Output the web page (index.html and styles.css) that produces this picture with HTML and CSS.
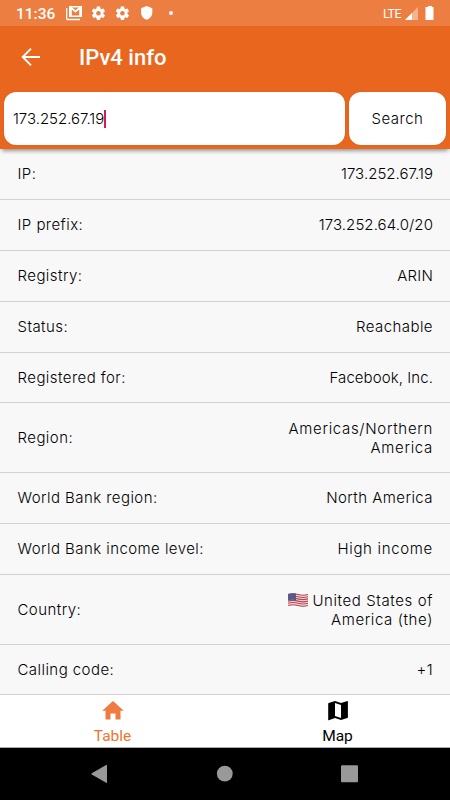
FILE: index.html
```html
<!DOCTYPE html>
<html lang="en">
<head>
<meta charset="utf-8">
<title>IPv4 info</title>
<link rel="stylesheet" href="styles.css">
</head>
<body>
<div class="screen">
  <div class="status">
    <span class="clock">11:36</span>
    <svg class="status-icons" width="110" height="26" viewBox="0 0 110 26" fill="#fff">
      <path d="M.7 8v10.800q0 .7.7.7H14" fill="none" stroke="#fff" stroke-width="1.300"/>
      <path d="M4 6.700h11.300v9.600H3.700V6.700z" fill="none" stroke="#fff" stroke-width="1.400"/>
      <path d="M4.800 16V7.500l4.700 4 4.700-4V16" fill="none" stroke="#fff" stroke-width="1.900"/>
      <g id="gear" transform="translate(24.400 5.200) scale(.67)"><path d="M19.430 12.980c.04-.32.07-.64.07-.98s-.03-.66-.07-.98l2.110-1.650c.19-.15.24-.42.120-.64l-2-3.460c-.12-.22-.39-.3-.61-.22l-2.490 1c-.52-.4-1.080-.73-1.690-.98l-.38-2.650C14.460 2.180 14.250 2 14 2h-4c-.25 0-.46.180-.49.420l-.38 2.650c-.61.250-1.170.590-1.690.98l-2.490-1c-.23-.09-.49 0-.61.220l-2 3.460c-.13.220-.07.490.120.640l2.110 1.650c-.04.320-.07.650-.07.980s.03.660.070.980l-2.110 1.650c-.19.150-.24.420-.12.640l2 3.460c.12.220.39.300.61.220l2.490-1c.52.400 1.080.730 1.690.980l.38 2.650c.03.240.24.420.49.420h4c.25 0 .46-.18.49-.42l.38-2.650c.61-.25 1.170-.59 1.690-.98l2.490 1c.23.09.49 0 .61-.22l2-3.460c.12-.22.07-.49-.12-.64zM12 15.500a3.500 3.500 0 1 1 0-7 3.500 3.500 0 0 1 0 7z"/></g>
      <use href="#gear" x="24"/>
      <path d="M80.700 6l5.600 2.200v4.300c0 3.300-2.200 6.200-5.600 7.300-3.400-1.100-5.600-4-5.600-7.300V8.200z"/>
      <circle cx="105" cy="13" r="2"/>
    </svg>
    <span class="lte">LTE</span>
    <svg class="signal" width="32" height="26" viewBox="0 0 32 26">
      <path d="M14 7v13H1z" fill="#f5b491"/>
      <path d="M8 13v7H1z" fill="#fff"/>
      <path d="M24 6h4v1h1.500v13h-8V7H24z" fill="#fff"/>
    </svg>
  </div>
  <header class="header">
    <div class="titlebar">
      <svg class="back" width="20" height="20" viewBox="0 0 20 20" fill="none" stroke="#fff" stroke-width="1.900"><path d="M19 10H2.500M10 1.700L1.700 10l8.300 8.300"/></svg>
      <h1>IPv4 info</h1>
    </div>
    <div class="search">
      <div class="field"><span class="ip">173.252.67.19</span><i class="caret"></i></div>
      <div class="button">Search</div>
    </div>
  </header>
  <main class="rows">
    <div class="row"><span>IP:</span><span class="ip">173.252.67.19</span></div>
    <div class="row"><span>IP prefix:</span><span class="prefix">173.252.64.0/20</span></div>
    <div class="row"><span>Registry:</span><span class="arin">ARIN</span></div>
    <div class="row"><span>Status:</span><span>Reachable</span></div>
    <div class="row short"><span>Registered for:</span><span class="narrow">Facebook, Inc.</span></div>
    <div class="row tall"><span>Region:</span><span class="wide">Americas/Northern<br>America</span></div>
    <div class="row"><span>World Bank region:</span><span>North America</span></div>
    <div class="row"><span>World Bank income level:</span><span class="wide">High income</span></div>
    <div class="row tall"><span>Country:</span><span class="country"><svg class="flag" width="20" height="14" viewBox="0 0 20 14"><path d="M0 1q5-1.500 10 0t10 0v12q-5 1.500-10 0T0 13z" fill="#eee2e4"/><path d="M0 1.500q5-1.500 10 0t10 0M0 3.700q5-1.500 10 0t10 0M0 5.900q5-1.500 10 0t10 0M0 8.100q5-1.500 10 0t10 0M0 10.300q5-1.500 10 0t10 0M0 12.500q5-1.500 10 0t10 0" fill="none" stroke="#b8434d" stroke-width="1.100"/><path d="M0 1q4-1.300 8-.4v6.600q-4-.9-8 .3z" fill="#565a8e"/></svg> United States of<br>America (the)</span></div>
    <div class="row short"><span>Calling code:</span><span class="plus">+1</span></div>
  </main>
  <nav class="tabs">
    <div class="tab active"><svg width="24" height="22" viewBox="0 0 24 22"><path d="M12 1L1.200 10.700h3.300v8.800h5v-6h5v6h5v-8.800h3.300z" fill="#ee7c40"/></svg><span class="label">Table</span></div>
    <div class="tab"><svg width="24" height="22" viewBox="0 0 24 22"><path fill-rule="evenodd" d="M21.500 1L15 3.100 9 1 2.700 3q-.5.200-.5.700v16.200q.1.400.6.300L9 17.900l6 2.100 6.300-2.100q.6-.2.600-.7V1.400q0-.4-.4-.4zM15 18l-6-2.100V3l6 2.100z"/></svg><span class="label">Map</span></div>
  </nav>
  <footer class="navbar">
    <svg width="450" height="52" viewBox="0 0 450 52" fill="#999"><path d="M107 17.300v17q0 1-.9.500L91.800 26.600q-1-.7 0-1.400L106.100 17q.9-.5.900.300z"/><circle cx="224.800" cy="25.700" r="7.900"/><rect x="341" y="17.300" width="17" height="17" rx="1"/></svg>
  </footer>
</div>
</body>
</html>
```

FILE: styles.css
```css
* { box-sizing: border-box; }
body { margin: 0; background: #f8f8f8; color: #000; font-family: Roboto, "Liberation Sans", sans-serif; }
svg { display: block; flex: none; }
.screen { width: 450px; height: 800px; display: flex; flex-direction: column; overflow: hidden; }
.status { height: 26px; flex: none; display: flex; align-items: center; background: #ed7e42; color: #fff; padding-left: 16px; }
.clock { width: 50px; font-size: 15.500px; font-weight: 500; line-height: 26px; padding-top: 2px; }
.lte { margin-left: auto; font-size: 12.500px; letter-spacing: -.5px; }
.signal { margin: 0 14px 0 3px; }
.header { height: 123px; flex: none; background: #e9661e; box-shadow: 0 4px 4px -2px rgba(0,0,0,.4); position: relative; }
.titlebar { height: 66px; display: flex; align-items: center; padding: 0 0 4px 21px; color: #fff; }
h1 { margin: 2px 0 0 38px; font-size: 22px; font-weight: 500; line-height: 28px; }
.search { display: flex; gap: 4px; padding: 0 4px; font-family: Inter, sans-serif; font-size: 15px; font-weight: 350; }
.field, .button { height: 53px; border-radius: 12px; background: #fff; display: flex; align-items: center; box-shadow: 0 0 1px #b84100; }
.field { width: 341px; padding-left: 9px; }
.button { width: 97px; justify-content: center; letter-spacing: .5px; }
.caret { width: 2px; height: 18px; background: #d81b50; }
.rows { height: 546px; flex: none; font-family: Inter, sans-serif; font-size: 15px; font-weight: 350; line-height: 19px; }
.row { height: 51px; display: flex; align-items: center; justify-content: space-between; padding: 0 17px 1px 17.500px; border-bottom: 1px solid #d2d2d2; letter-spacing: .44px; }
.row > span:last-child { text-align: right; }
.short { height: 50px; padding-bottom: 0; }
.tall { height: 70px; padding-bottom: 0; }
.row .ip { letter-spacing: .03px; }
.search .ip { letter-spacing: -.03px; }
.prefix { letter-spacing: .09px; }
.arin { letter-spacing: .2px; }
.narrow { letter-spacing: .08px; }
.wide { letter-spacing: .68px; }
.country { letter-spacing: .6px; }
.flag { display: inline-block; vertical-align: -1px; }
.tabs { height: 53px; flex: none; display: flex; background: #fff; border-bottom: 1px solid #aaa; }
.tab { flex: 1; display: flex; flex-direction: column; align-items: center; padding-top: 5px; font-size: 15.500px; line-height: 20px; }
.label { margin-top: 4px; }
.active { color: #ee7430; }
.navbar { height: 52px; flex: none; background: #000; }
```
